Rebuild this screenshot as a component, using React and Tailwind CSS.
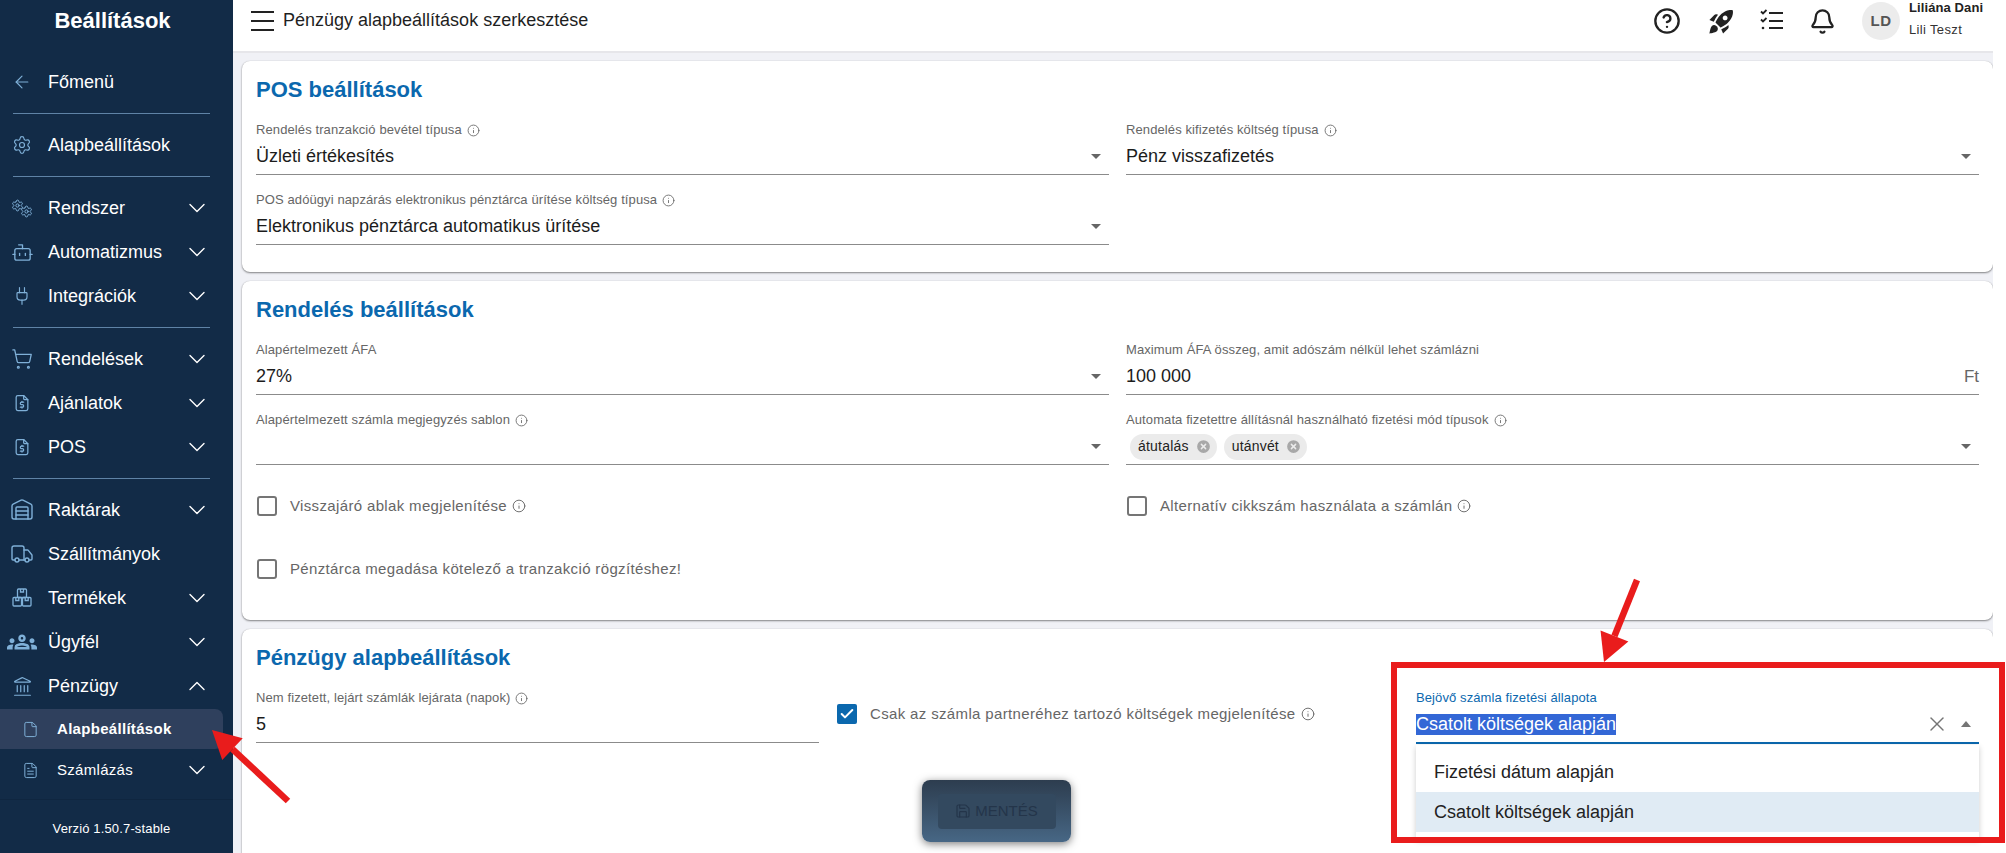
import React from "react";
import {
  ArrowLeft, Settings, Bot, Plug, ShoppingCart, FileText, Warehouse, Truck,
  Landmark, File, ChevronDown, ChevronUp, CircleHelp, Bell, Info, Check, X, Save, CircleX,
} from "lucide-react";
import { TbFileDollar } from "react-icons/tb";
import { MdOutlineGroups, MdRocketLaunch } from "react-icons/md";

const FONT = "font-['Liberation_Sans',Arial,sans-serif]";

const TwoGears = ({ className }) => (
  <span className={`relative block w-[22px] h-[19px] ${className}`}>
    <Settings size={13} strokeWidth={1.8} className="absolute left-0 top-0" />
    <Settings size={13} strokeWidth={1.8} className="absolute right-0 bottom-0" />
  </span>
);

const ThreeBoxes = ({ className }) => (
  <svg width="20" height="20" viewBox="0 0 20 20" fill="none" stroke="currentColor" strokeWidth="1.3" className={className}>
    <rect x="5.5" y="1" width="9" height="8.5" rx="1" />
    <rect x="1" y="9.5" width="8.5" height="8.5" rx="1" />
    <rect x="10.5" y="9.5" width="8.5" height="8.5" rx="1" />
    <path d="M8.5 1v3h3V1M3.8 9.5v3h3v-3M13.2 9.5v3h3v-3" />
  </svg>
);

// react-icons reads strokeWidth differently, so these two drop it
const Groups = ({ size }) => <MdOutlineGroups size={size} className="shrink-0" />;
const FileDollar = ({ size }) => <TbFileDollar size={size} strokeWidth={1.5} />;

const NavRow = ({ icon: Icon, label, arrow, size = 20 }) => (
  <div className="flex items-center h-[44px] pl-[12px] pr-[22px] text-white">
    <span className="w-[20px] shrink-0 flex justify-center text-[#7fb0d8]">
      <Icon size={size} strokeWidth={1.4} className="shrink-0" />
    </span>
    <span className="ml-[16px] flex-1 text-[18px] leading-none">{label}</span>
    {arrow === "down" && <ChevronDown size={28} strokeWidth={1.2} />}
    {arrow === "up" && <ChevronUp size={28} strokeWidth={1.2} />}
  </div>
);

const Divider = () => <div className="h-px bg-[#5f83a6] mx-[13px] my-[9px] w-[197px]" />;

const Sidebar = () => (
  <aside className="w-[233px] h-[853px] bg-[#122b47] shrink-0 flex flex-col">
    <div className="h-[60px] pt-[8px] pr-[8px] text-center text-white font-bold text-[22px] leading-[25px]">Beállítások</div>
    <NavRow icon={ArrowLeft} label="Főmenü" />
    <Divider />
    <NavRow icon={Settings} label="Alapbeállítások" />
    <Divider />
    <NavRow icon={TwoGears} label="Rendszer" arrow="down" />
    <NavRow icon={Bot} size={23} label="Automatizmus" arrow="down" />
    <NavRow icon={Plug} label="Integrációk" arrow="down" />
    <Divider />
    <NavRow icon={ShoppingCart} size={22} label="Rendelések" arrow="down" />
    <NavRow icon={FileDollar} size={22} label="Ajánlatok" arrow="down" />
    <NavRow icon={FileDollar} size={22} label="POS" arrow="down" />
    <Divider />
    <NavRow icon={Warehouse} size={24} label="Raktárak" arrow="down" />
    <NavRow icon={Truck} size={24} label="Szállítmányok" />
    <NavRow icon={ThreeBoxes} label="Termékek" arrow="down" />
    <NavRow icon={Groups} size={30} label="Ügyfél" arrow="down" />
    <NavRow icon={Landmark} size={21} label="Pénzügy" arrow="up" />
    <div className="flex items-center h-[40px] w-[223px] rounded-r-[8px] bg-[#2f405d] pl-[22px] text-white mt-[1px]">
      <File size={17} strokeWidth={1.4} className="text-[#7fb0d8]" />
      <span className="ml-[18px] text-[15px] font-bold tracking-[0.3px]">Alapbeállítások</span>
    </div>
    <div className="flex items-center h-[40px] mt-[1px] pl-[22px] pr-[22px] text-white">
      <FileText size={17} strokeWidth={1.4} className="text-[#7fb0d8]" />
      <span className="ml-[18px] flex-1 text-[15px] tracking-[0.3px]">Számlázás</span>
      <ChevronDown size={28} strokeWidth={1.2} />
    </div>
    <div className="mt-[9px] border-t border-[#0f2640] flex-1 flex items-center justify-center text-white text-[13px] tracking-[0.15px] pt-[5px] pr-[10px]">
      Verzió 1.50.7-stable
    </div>
  </aside>
);

const ChecklistIcon = () => (
  <svg width="28" height="28" viewBox="0 0 28 28" fill="none" stroke="#222" strokeWidth="2.2" className="ml-[22px]">
    <path d="M3 4.5l2 2 3.5-3.5M3 12.5l2 2 3.5-3.5" strokeWidth="1.8" />
    <circle cx="5" cy="21" r="1.3" fill="#222" stroke="none" />
    <path d="M11 6h14M11 14h14M11 21h14" />
  </svg>
);

const Header = () => (
  <header className="h-[53px] bg-white border-b-2 border-[#e6e6ea] flex items-start pl-[18px] pr-[10px] text-[#222]">
    <svg width="24" height="20" viewBox="0 0 24 20" stroke="#222" strokeWidth="2" className="mt-[11px]">
      <path d="M0 1h23M0 10h23M0 19h23" />
    </svg>
    <div className="ml-[8px] mt-[10px] text-[18px] leading-[21px] text-[#1f1f1f]">Pénzügy alapbeállítások szerkesztése</div>
    <div className="ml-auto flex items-center h-[42px]">
      <CircleHelp size={28} strokeWidth={2} />
      <MdRocketLaunch size={29} className="ml-[26px]" />
      <ChecklistIcon />
      <Bell size={27} strokeWidth={2} className="ml-[23px]" />
      <div className="ml-[26px] w-[38px] h-[38px] rounded-full bg-[#ececec] flex items-center justify-center text-[15px] font-bold text-[#555] tracking-[0.5px]">LD</div>
      <div className="ml-[9px] w-[74px] -mt-[4px] text-[13px] leading-[22px] whitespace-nowrap">
        <div className="font-bold text-[#222] tracking-[0.1px]">Liliána Dani</div>
        <div className="text-[#333] tracking-[0.35px]">Lili Teszt</div>
      </div>
    </div>
  </header>
);

const Label = ({ text, info, active }) => (
  <div className={`flex items-center gap-[5px] text-[13px] leading-[14px] tracking-[0.1px] ${active ? "text-[#0b68ae]" : "text-[#666]"}`}>
    {text}
    {info && <Info size={13} strokeWidth={1.6} />}
  </div>
);

const Caret = () => <span className="w-0 h-0 border-x-[5px] border-x-transparent border-t-[5px] border-t-[#666]" />;

const Field = ({ label, info, value, suffix, select, children }) => (
  <div className="h-[52px]">
    <Label text={label} info={info} />
    <div className="h-[38px] border-b border-[#8b8b8b] flex items-center text-[18px] text-[#1c1c1c] pr-[8px] pt-[2px]">
      <div className="flex-1 flex items-center">{children || value}</div>
      {suffix && <span className="text-[17px] text-[#666] -mr-[8px]">{suffix}</span>}
      {select && <Caret />}
    </div>
  </div>
);

const Chip = ({ text }) => (
  <span className="h-[26px] rounded-full bg-[#ebebeb] flex items-center pl-[8px] pr-[5px] gap-[6px] text-[14px] tracking-[0.2px] text-[#222] mr-[7px] first:ml-[4px]">
    {text}
    <CircleX size={17} strokeWidth={2} className="text-[#ebebeb] fill-[#a8a8a8]" />
  </span>
);

const Tick = ({ text, info, checked }) => (
  <div className="flex items-center h-[24px] gap-[13px] text-[15px] tracking-[0.35px] text-[#666]">
    {checked ? (
      <span className="w-[20px] h-[20px] rounded-[2px] bg-[#0b68ae] flex items-center justify-center ml-[1px]">
        <Check size={16} strokeWidth={3} className="text-white" />
      </span>
    ) : (
      <span className="w-[20px] h-[20px] rounded-[3px] border-[2.5px] border-[#757575] ml-[1px]" />
    )}
    <span className="flex items-center gap-[5px]">
      {text}
      {info && <Info size={14} strokeWidth={1.6} />}
    </span>
  </div>
);

const Card = ({ title, className, children }) => (
  <section className={`bg-white rounded-[8px] shadow-[0_1px_2px_rgba(0,0,0,0.45),0_0_1px_rgba(0,0,0,0.2)] px-[14px] shrink-0 ${className}`}>
    <h2 className="text-[22px] font-bold text-[#0b68ae] leading-[24px] pt-[17px]">{title}</h2>
    {children}
  </section>
);

const Content = () => (
  <main className="h-[800px] bg-[#f0f1f6] pl-[9px] pt-[8px] flex flex-col gap-[9px] overflow-hidden">
    <Card title="POS beállítások" className="h-[211px]">
      <div className="grid grid-cols-2 gap-x-[17px] gap-y-[18px] mt-[21px]">
        <Field label="Rendelés tranzakció bevétel típusa" info value="Üzleti értékesítés" select />
        <Field label="Rendelés kifizetés költség típusa" info value="Pénz visszafizetés" select />
        <Field label="POS adóügyi napzárás elektronikus pénztárca ürítése költség típusa" info value="Elektronikus pénztárca automatikus ürítése" select />
      </div>
    </Card>
    <Card title="Rendelés beállítások" className="h-[339px]">
      <div className="grid grid-cols-2 gap-x-[17px] gap-y-[18px] mt-[21px]">
        <Field label="Alapértelmezett ÁFA" value="27%" select />
        <Field label="Maximum ÁFA összeg, amit adószám nélkül lehet számlázni" value="100 000" suffix="Ft" />
        <Field label="Alapértelmezett számla megjegyzés sablon" info select />
        <Field label="Automata fizetettre állításnál használható fizetési mód típusok" info select>
          <Chip text="átutalás" />
          <Chip text="utánvét" />
        </Field>
      </div>
      <div className="grid grid-cols-2 gap-x-[17px] mt-[29px]">
        <Tick text="Visszajáró ablak megjelenítése" info />
        <Tick text="Alternatív cikkszám használata a számlán" info />
      </div>
      <div className="mt-[39px]">
        <Tick text="Pénztárca megadása kötelező a tranzakció rögzítéshez!" />
      </div>
    </Card>
    <Card title="Pénzügy alapbeállítások" className="h-[240px]">
      <div className="grid grid-cols-3 gap-x-[17px] mt-[21px]">
        <Field label="Nem fizetett, lejárt számlák lejárata (napok)" info value="5" />
        <div className="pt-[11px]"><Tick text="Csak az számla partneréhez tartozó költségek megjelenítése" info checked /></div>
        <div className="relative">
          <Label text="Bejövő számla fizetési állapota" active />
          <div className="h-[39px] border-b-2 border-[#0b68ae] flex items-center text-[18px] pt-[1px]">
            <span className="bg-[#3367d6] text-white leading-[21px]">Csatolt költségek alapján</span>
            <X size={24} strokeWidth={1.4} className="ml-auto text-[#757575]" />
            <span className="ml-[12px] mr-[8px] w-0 h-0 border-x-[5.5px] border-x-transparent border-b-[6px] border-b-[#757575]" />
          </div>
          <div className="absolute left-0 right-0 top-[54px] bg-white shadow-[0_2px_6px_rgba(0,0,0,0.2)] py-[7px] text-[18px] text-[#222] z-10">
            <div className="h-[40px] flex items-center pl-[18px]">Fizetési dátum alapján</div>
            <div className="h-[40px] flex items-center pl-[18px] bg-[#e0ebf4]">Csatolt költségek alapján</div>
          </div>
        </div>
      </div>
    </Card>
  </main>
);

const Arrow = ({ x1, y1, x2, y2 }) => {
  // line plus head, all in page coordinates
  const a = Math.atan2(y2 - y1, x2 - x1);
  const len = 28;
  const w = 15;
  const bx = x2 - Math.cos(a) * len;
  const by = y2 - Math.sin(a) * len;
  const nx = -Math.sin(a) * w;
  const ny = Math.cos(a) * w;
  return (
    <g fill="#e91c1c" stroke="none">
      <line x1={x1} y1={y1} x2={bx} y2={by} stroke="#e91c1c" strokeWidth="6.5" />
      <polygon points={`${x2},${y2} ${bx + nx},${by + ny} ${bx - nx},${by - ny}`} />
    </g>
  );
};

const Annotations = () => (
  <>
    <div className="absolute left-[1391px] top-[662px] w-[614px] h-[181px] border-[6px] border-[#e91c1c] z-20 pointer-events-none" />
    <svg className="absolute left-0 top-0 z-20 pointer-events-none" width="2006" height="853">
      <Arrow x1={288} y1={801} x2={212} y2={730} />
      <Arrow x1={1637} y1={580} x2={1604} y2={662} />
    </svg>
  </>
);

const SaveBar = () => (
  <div className="absolute left-[922px] top-[780px] w-[149px] h-[62px] rounded-[8px] bg-gradient-to-b from-[#2d3d4f] to-[#476785] shadow-[0_2px_8px_rgba(0,0,0,0.5)] flex items-center justify-center z-10">
    <div className="w-[118px] h-[35px] rounded-[4px] bg-[#33495f] flex items-center justify-center gap-[4px] text-[15px] text-[#24354a]">
      <Save size={16} strokeWidth={1.8} />
      MENTÉS
    </div>
  </div>
);

export default function App() {
  return (
    <div className={`relative w-[2006px] h-[853px] overflow-hidden flex bg-white ${FONT}`}>
      <Sidebar />
      <div className="w-[1760px] h-[853px] flex flex-col">
        <Header />
        <Content />
      </div>
      <SaveBar />
      <Annotations />
    </div>
  );
}
